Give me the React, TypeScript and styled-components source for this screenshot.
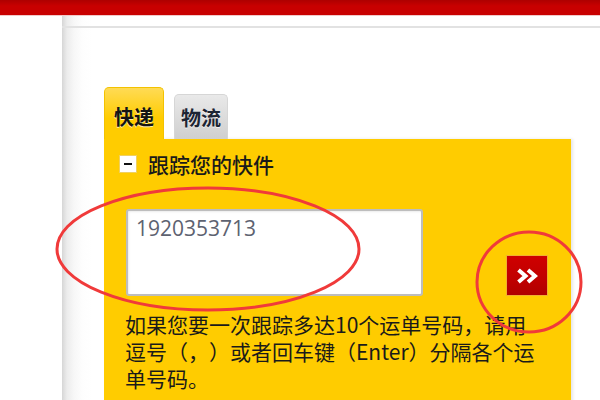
import React from 'react';
import styled, { createGlobalStyle, css } from 'styled-components';

const GlobalStyle = createGlobalStyle`
  html, body {
    margin: 0;
    padding: 0;
    width: 600px;
    height: 400px;
    overflow: hidden;
    background: #fff;
  }
`;

const cjk = `"Noto Sans CJK SC", "Noto Sans", sans-serif`;

const Page = styled.div`
  position: relative;
  width: 600px;
  height: 400px;
  overflow: hidden;
  display: flex;
  flex-direction: column;
  font-family: ${cjk};
  text-spacing-trim: space-all;
`;

const TopBar = styled.div`
  height: 16px;
  flex: none;
  background: linear-gradient(#ad0000, #c80000 40%, #c80000);
  border-bottom: 1px solid #f2c8c8;
  box-sizing: border-box;
`;

const Body = styled.div`
  flex: 1;
  display: flex;
  min-height: 0;
`;

const Gutter = styled.div`
  width: 62px;
  flex: none;
`;

const Main = styled.div`
  flex: 1;
  display: flex;
  flex-direction: column;
  background: linear-gradient(
    to right,
    #d6d6d6 0,
    #ececec 5px,
    #f7f7f7 12px,
    #fdfdfd 20px,
    #fff 30px
  );
`;

const SubHeader = styled.div`
  height: 10px;
  flex: none;
  border-bottom: 2px solid #e2e2e2;
`;

const Content = styled.div`
  padding: 59px 0 0 42px;
`;

const Tabs = styled.div`
  display: flex;
  align-items: flex-end;
  gap: 10px;
`;

const Tab = styled.div<{ $active?: boolean }>`
  box-sizing: border-box;
  text-align: center;
  font-size: 20px;
  line-height: 21px;
  font-weight: 700;
  border-radius: 5px 5px 0 0;
  text-shadow: 0 1px 0 rgba(255, 255, 255, 0.7);
  ${(props) =>
    props.$active
      ? css`
          width: 60px;
          height: 52px;
          padding-top: 18px;
          color: #141414;
          background: linear-gradient(#ffdb55, #ffcc00 60%);
          border: 1px solid #f3c200;
          border-bottom: none;
        `
      : css`
          width: 54px;
          height: 45px;
          padding-top: 12px;
          color: #1c2433;
          background: linear-gradient(#e9e9e9, #cfcfcf);
          border: 1px solid #d6d6d6;
          border-bottom: none;
        `}
`;

const Panel = styled.div`
  width: 467px;
  min-height: 280px;
  background: #ffcc00;
  box-shadow: 2px 0 3px rgba(0, 0, 0, 0.1);
  padding-top: 15px;
  box-sizing: border-box;
`;

const PanelHeader = styled.div`
  display: flex;
  align-items: center;
  gap: 12px;
  padding-left: 16px;
  height: 20px;
`;

const Toggle = styled.span`
  position: relative;
  width: 16px;
  height: 16px;
  background: #fff;
  box-shadow: 0 0 0 1px #f0d060;

  &::after {
    content: '';
    position: absolute;
    left: 4px;
    top: 7px;
    width: 8px;
    height: 2px;
    background: #111;
  }
`;

const Title = styled.span`
  font-size: 21px;
  line-height: 20px;
  color: #1a1a1a;
  font-weight: 500;
`;

const FormRow = styled.div`
  display: flex;
  align-items: flex-end;
  gap: 83px;
  margin-top: 35px;
  padding-left: 22px;
`;

const Input = styled.textarea`
  box-sizing: border-box;
  width: 297px;
  height: 87px;
  margin: 0;
  padding: 5px 8px;
  border: 2px solid #bdbdbd;
  border-radius: 3px;
  background: #fff;
  box-shadow: inset 1px 1px 2px rgba(0, 0, 0, 0.08);
  font-family: "Open Sans", "Liberation Sans", sans-serif;
  font-size: 21px;
  line-height: 24px;
  color: #5d6270;
  resize: none;
  outline: none;
  overflow: hidden;
`;

const GoButton = styled.button`
  box-sizing: border-box;
  width: 42px;
  height: 41px;
  margin: 0;
  padding: 0;
  display: flex;
  align-items: center;
  justify-content: center;
  background: linear-gradient(#cf0000, #c00000 60%, #b00000);
  border: 1px solid #f0b030;
  cursor: pointer;
`;

const Note = styled.p`
  margin: 15px 0 0;
  padding-left: 21px;
  font-size: 21px;
  line-height: 27px;
  color: #1a1a1a;
`;

const Annotations = styled.svg`
  position: absolute;
  left: 0;
  top: 0;
  pointer-events: none;
`;

const App: React.FC = () => {
  return (
    <>
      <GlobalStyle />
      <Page>
        <TopBar />
        <Body>
          <Gutter />
          <Main>
            <SubHeader />
            <Content>
              <Tabs>
                <Tab $active>快递</Tab>
                <Tab>物流</Tab>
              </Tabs>
              <Panel>
                <PanelHeader>
                  <Toggle />
                  <Title>跟踪您的快件</Title>
                </PanelHeader>
                <FormRow>
                  <Input defaultValue="1920353713" spellCheck={false} />
                  <GoButton aria-label="跟踪">
                    <svg width="22" height="16" viewBox="0 0 22 16">
                      <polyline
                        points="2.5,2 9.5,8 2.5,14"
                        fill="none"
                        stroke="#fff"
                        strokeWidth="4"
                      />
                      <polyline
                        points="12,2 19,8 12,14"
                        fill="none"
                        stroke="#fff"
                        strokeWidth="4"
                      />
                    </svg>
                  </GoButton>
                </FormRow>
                <Note>
                  如果您要一次跟踪多达10个运单号码，请用
                  <br />
                  逗号（，）或者回车键（Enter）分隔各个运
                  <br />
                  单号码。
                </Note>
              </Panel>
            </Content>
          </Main>
        </Body>
        <Annotations width="600" height="400" viewBox="0 0 600 400">
          <ellipse
            cx="208"
            cy="249"
            rx="151"
            ry="61"
            fill="none"
            stroke="#f03a3a"
            strokeWidth="3"
          />
          <ellipse
            cx="529"
            cy="282"
            rx="52"
            ry="50"
            fill="none"
            stroke="#f03a3a"
            strokeWidth="3"
          />
        </Annotations>
      </Page>
    </>
  );
};

export default App;
